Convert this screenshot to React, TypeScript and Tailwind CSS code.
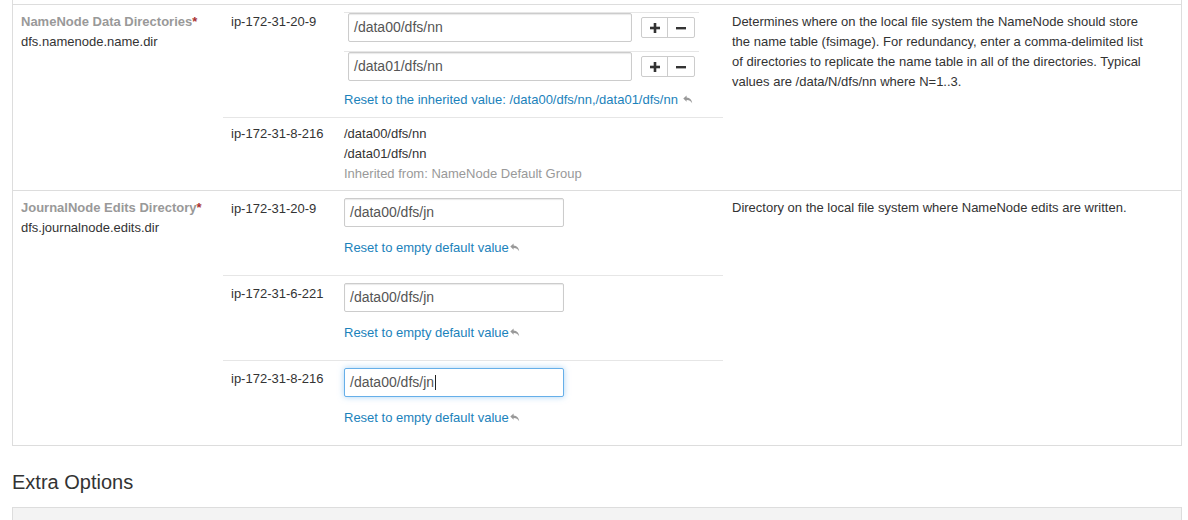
import React from "react";

const ResetIcon = () => (
  <svg width="10" height="9" viewBox="0 0 10 9" className="inline-block align-[0px] ml-px" aria-hidden="true">
    <path d="M3.6 0.5 L0.3 3.6 L3.6 6.7 L3.6 4.9 C6.0 4.8 7.6 5.5 9.2 8.3 C8.9 5.0 7.0 2.7 3.6 2.5 Z" fill="#999" />
  </svg>
);

const PlusIcon = () => (
  <svg width="10" height="10" viewBox="0 0 10 10" aria-hidden="true">
    <rect x="3.7" y="0" width="2.6" height="10" fill="#333" />
    <rect x="0" y="3.7" width="10" height="2.6" fill="#333" />
  </svg>
);

const MinusIcon = () => (
  <svg width="10" height="10" viewBox="0 0 10 10" aria-hidden="true">
    <rect x="0" y="4" width="10" height="2.4" fill="#333" />
  </svg>
);

const TextBox = ({ value, width, focused }: { value: string; width: string; focused?: boolean }) => (
  <div
    className={
      "h-[29px] flex items-center px-[5px] text-[14px] text-[#555] bg-white rounded-[2px] border " +
      width +
      (focused
        ? " border-[#66afe9] shadow-[0_0_6px_rgba(102,175,233,0.55)]"
        : " border-[#ccc] shadow-[inset_0_1px_1px_rgba(0,0,0,0.09)]")
    }
  >
    <span>{value}</span>
    {focused && <span className="w-px h-[15px] bg-[#222] ml-[1px]" />}
  </div>
);

const ListItem = ({ value }: { value: string }) => (
  <div className="w-[355px] border-t border-[#e6e6e6] flex items-start pb-[9px]">
    <div className="ml-1">
      <TextBox value={value} width="w-[284px]" />
    </div>
    <div className="ml-[9px] mt-[4px] flex h-[21px] border border-[#ccc] rounded-[2px] bg-white">
      <div className="w-[26px] flex items-center justify-center border-r border-[#ccc]">
        <PlusIcon />
      </div>
      <div className="w-[26px] flex items-center justify-center">
        <MinusIcon />
      </div>
    </div>
  </div>
);

const Host = ({ name }: { name: string }) => (
  <div className="w-[121px] shrink-0 pl-2 text-[13px] leading-5 text-[#333]">{name}</div>
);

const JournalRow = ({ host, focused, first }: { host: string; focused?: boolean; first?: boolean }) => (
  <div className={"flex pt-[7px] pb-[17px]" + (first ? "" : " border-t border-[#e6e6e6]")}>
    <div className="pt-px">
      <Host name={host} />
    </div>
    <div className="flex flex-col">
      <TextBox value="/data00/dfs/jn" width="w-[220px]" focused={focused} />
      <div className="mt-[11px] leading-5 text-[#1b82bb]">
        Reset to empty default value
        <ResetIcon />
      </div>
    </div>
  </div>
);

export default function App() {
  return (
    <div className="w-[1188px] h-[520px] overflow-hidden bg-white pl-3 pr-[6px] text-[13px] text-[#333] font-['Liberation_Sans',Arial,sans-serif]">
      <div className="border-x border-b border-[#ddd] pt-1">
        {/* Row 1 */}
        <div className="flex border-t border-[#ddd]">
          <div className="w-[210px] shrink-0 pl-2 pt-[7px] leading-5">
            <div className="font-bold text-[#999]">
              NameNode Data Directories<span className="text-[#a33]">*</span>
            </div>
            <div>dfs.namenode.name.dir</div>
          </div>
          <div className="w-[500px] shrink-0 flex flex-col">
            <div className="flex pt-[7px] pb-[7px]">
              <Host name="ip-172-31-20-9" />
              <div className="flex flex-col">
                <ListItem value="/data00/dfs/nn" />
                <ListItem value="/data01/dfs/nn" />
                <div className="leading-5 text-[#1b82bb]">
                  Reset to the inherited value: /data00/dfs/nn,/data01/dfs/nn <ResetIcon />
                </div>
              </div>
            </div>
            <div className="flex border-t border-[#e6e6e6] pt-[6px] pb-[6px]">
              <Host name="ip-172-31-8-216" />
              <div className="leading-5">
                <div>/data00/dfs/nn</div>
                <div>/data01/dfs/nn</div>
                <div className="text-[#999]">Inherited from: NameNode Default Group</div>
              </div>
            </div>
          </div>
          <div className="flex-1 pl-[9px] pr-[30px] pt-[7px] leading-5">
            Determines where on the local file system the NameNode should store the name table (fsimage). For
            redundancy, enter a comma-delimited list of directories to replicate the name table in all of the
            directories. Typical values are /data/N/dfs/nn where N=1..3.
          </div>
        </div>
        {/* Row 2 */}
        <div className="flex border-t border-[#ddd]">
          <div className="w-[210px] shrink-0 pl-2 pt-[7px] leading-5">
            <div className="font-bold text-[#999]">
              JournalNode Edits Directory<span className="text-[#a33]">*</span>
            </div>
            <div>dfs.journalnode.edits.dir</div>
          </div>
          <div className="w-[500px] shrink-0 flex flex-col">
            <JournalRow host="ip-172-31-20-9" first />
            <JournalRow host="ip-172-31-6-221" />
            <JournalRow host="ip-172-31-8-216" focused />
          </div>
          <div className="flex-1 pl-[9px] pr-[30px] pt-[7px] leading-5">
            Directory on the local file system where NameNode edits are written.
          </div>
        </div>
      </div>
      <h3 className="mt-[25px] text-[20px] leading-[22px] text-[#333] font-normal">Extra Options</h3>
      <div className="mt-[14px] h-[40px] border border-[#ddd] bg-[#f3f3f3]" />
    </div>
  );
}
